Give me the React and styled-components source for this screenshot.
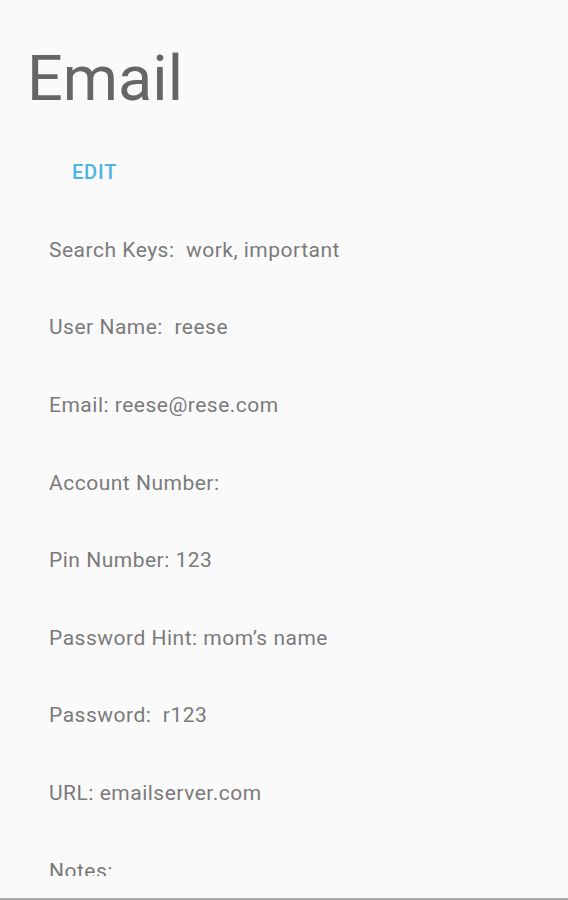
import React from 'react'
import styled, { createGlobalStyle } from 'styled-components'

const GlobalStyle = createGlobalStyle`
    html, body {
        margin: 0;
        padding: 0;
        background: #fafafa;
    }
    body {
        font-family: Roboto, "Noto Sans", "Liberation Sans", sans-serif;
    }
`

const Screen = styled.div`
    width: 568px;
    height: 900px;
    display: flex;
    flex-direction: column;
    background: #fafafa;
`

const Scroller = styled.div`
    height: 876px;
    overflow: hidden;
    flex-shrink: 0;
`

const BottomEdge = styled.div`
    flex: 1;
    border-bottom: 2px solid #a9a9a9;
`

const Title = styled.h1`
    margin: 47px 0 0 27px;
    font-size: 63px;
    line-height: 1;
    font-weight: 400;
    color: #666;
`

const EditButton = styled.button`
    display: block;
    height: 48px;
    margin: 38px 0 0 72px;
    padding: 0;
    border: none;
    background: transparent;
    font-family: inherit;
    font-size: 20px;
    font-weight: 500;
    letter-spacing: 0.8px;
    color: #4cb4e1;
    cursor: pointer;
`

const FieldList = styled.div`
    margin-top: 15px;
    display: flex;
    flex-direction: column;
`

const FieldRow = styled.div`
    height: 77.6px;
    display: flex;
    align-items: center;
    padding-left: 49px;
    font-size: 21px;
    letter-spacing: 0.5px;
    color: #7a7a7a;
    white-space: pre;
`

const fields = [
    'Search Keys:  work, important',
    'User Name:  reese',
    'Email: reese@rese.com',
    'Account Number:',
    'Pin Number: 123',
    'Password Hint: mom\u2019s name',
    'Password:  r123',
    'URL: emailserver.com',
    'Notes:',
]

const App = () => (
    <Screen>
        <GlobalStyle />
        <Scroller>
            <Title>Email</Title>
            <EditButton>EDIT</EditButton>
            <FieldList>
                {fields.map(f => (
                    <FieldRow key={f}>{f}</FieldRow>
                ))}
            </FieldList>
        </Scroller>
        <BottomEdge />
    </Screen>
)

export default App
